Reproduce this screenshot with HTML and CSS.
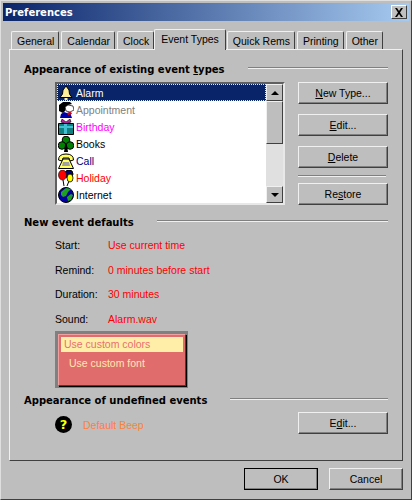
FILE: index.html
```html
<!DOCTYPE html>
<html lang="en">
<head>
    <meta charset="UTF-8">
    <title>Preferences</title>
    <link rel="stylesheet" href="styles.css">
</head>
<body>
    <div class="window">
        <div class="titlebar">
            <span class="title">Preferences</span>
            <span class="close">
                <svg width="10" height="9" viewBox="0 0 10 9"><path d="M1 0h2l2 3 2-3h2L6 4.500 9 9H7L5 6 3 9H1l3-4.500z" fill="#000"/></svg>
            </span>
        </div>

        <div class="tabs">
            <div class="tab">General</div>
            <div class="tab">Calendar</div>
            <div class="tab">Clock</div>
            <div class="tab active">Event Types</div>
            <div class="tab">Quick Rems</div>
            <div class="tab">Printing</div>
            <div class="tab">Other</div>
        </div>

        <div class="panel">
            <!-- Existing event types -->
            <div class="heading heading-first">
                <span>Appearance of existing event <u>t</u>ypes</span>
                <i class="rule"></i>
            </div>
            <div class="types">
                <div class="list">
                    <div class="rows">
                        <div class="row selected">
                            <svg class="icon" viewBox="0 0 16 16"><path d="M8 1 9.500 3 11 5 11.500 9 14 12.500H2L4.500 9 5 5 6.500 3z" fill="#ffef9a" stroke="#000"/><path d="M6.500 13h3v2h-3z" fill="#ffef9a"/></svg>
                            <span>Alarm</span>
                        </div>
                        <div class="row c-gray">
                            <svg class="icon" viewBox="0 0 16 16"><path d="M1 9 1 3 5 0 12 0 14 2 10 3 8 5 7 9 5 11z" fill="#000"/><path d="M7 5 10 3 15 4 16 8 12 10 8 9z" fill="#fff" stroke="#000" stroke-width=".7"/><path d="M3 12 6 10 9 11 12 10 14 16H2z" fill="#0000a8"/><path d="M9 11 13 10 14 12 10 13z" fill="#e00000"/></svg>
                            <span>Appointment</span>
                        </div>
                        <div class="row c-magenta">
                            <svg class="icon" viewBox="0 0 16 16"><path d="M4 0 8 3 12 0 13 3 8 5 3 3z" fill="#c020a0" stroke="#000" stroke-width=".6"/><path d="M.500 4.500h15v11H.500z" fill="#108080" stroke="#000"/><path d="M6 5h3v10H6zM1 7h14v2H1z" fill="#40c0d0"/></svg>
                            <span>Birthday</span>
                        </div>
                        <div class="row c-black">
                            <svg class="icon" viewBox="0 0 16 16"><circle cx="8" cy="4" r="3.800" fill="#008000" stroke="#000"/><circle cx="4" cy="9.500" r="3.800" fill="#008000" stroke="#000"/><circle cx="12" cy="9.500" r="3.800" fill="#008000" stroke="#000"/><path d="M7 9h2l1 7H6z" fill="#000"/></svg>
                            <span>Books</span>
                        </div>
                        <div class="row c-navy">
                            <svg class="icon" viewBox="0 0 16 16"><path d="M.500 7Q.500 1 8 1t7.500 6l-3.500 1-1-3H5L4 8z" fill="#ffff60" stroke="#000"/><path d="M5 6h6l4.500 9.500H.500z" fill="#ffff60" stroke="#000"/><path d="M5 9h6l1 4H4z" fill="#a0a0a0"/></svg>
                            <span>Call</span>
                        </div>
                        <div class="row c-red">
                            <svg class="icon" viewBox="0 0 16 16"><path d="M5 10 6 16M11 11 9 16" stroke="#000"/><ellipse cx="11" cy="4" rx="4" ry="4" fill="#000080" stroke="#000"/><ellipse cx="4.500" cy="5" rx="4" ry="5" fill="#ff0000" stroke="#000" stroke-width=".6"/><ellipse cx="12" cy="8" rx="3" ry="4" fill="#ffff00" stroke="#000" stroke-width=".8"/></svg>
                            <span>Holiday</span>
                        </div>
                        <div class="row c-black">
                            <svg class="icon" viewBox="0 0 16 16"><circle cx="8" cy="8" r="7.500" fill="#0000a0" stroke="#000"/><path d="M3 5 8 1l5 1-3 3-2 4-3 1-2-2zM9 10l4-3 2 1-2 5-3 1z" fill="#20a020"/></svg>
                            <span>Internet</span>
                        </div>
                    </div>
                    <div class="scrollbar">
                        <div class="arrow"><i class="tri-up"></i></div>
                        <div class="track"><div class="thumb"></div></div>
                        <div class="arrow"><i class="tri-down"></i></div>
                    </div>
                </div>
                <div class="actions">
                    <button class="btn"><u>N</u>ew Type...</button>
                    <button class="btn"><u>E</u>dit...</button>
                    <button class="btn"><u>D</u>elete</button>
                    <i class="rule action-rule"></i>
                    <button class="btn">Re<u>s</u>tore</button>
                </div>
            </div>

            <!-- New event defaults -->
            <div class="heading heading-defaults">
                <span>New event defaults</span>
                <i class="rule"></i>
            </div>
            <div class="defaults">
                <span>Start:</span><span class="val">Use current time</span>
                <span>Remind:</span><span class="val">0 minutes before start</span>
                <span>Duration:</span><span class="val">30 minutes</span>
                <span>Sound:</span><span class="val">Alarm.wav</span>
            </div>
            <div class="custom">
                <div class="custom-inner">
                    <div class="custom-sel">Use custom colors</div>
                    <div class="custom-font">Use custom font</div>
                </div>
            </div>

            <!-- Undefined events -->
            <div class="heading heading-undefined">
                <span>Appearance of undefined events</span>
                <i class="rule"></i>
            </div>
            <div class="undefined">
                <svg class="help" viewBox="0 0 17 17"><circle cx="8.500" cy="8.500" r="8.500" fill="#000"/><text x="8.500" y="13" text-anchor="middle" class="help-mark">?</text></svg>
                <span class="beep">Default Beep</span>
                <button class="btn btn-edit">E<u>d</u>it...</button>
            </div>
        </div>

        <div class="footer">
            <button class="btn btn-wide btn-default">OK</button>
            <button class="btn btn-wide">Cancel</button>
        </div>
    </div>
</body>
</html>
```

FILE: styles.css
```css
* {
    box-sizing: border-box;
}
body {
    margin: 0;
    width: 412px;
    height: 500px;
    overflow: hidden;
    font-family: "Liberation Sans", Arial, sans-serif;
    font-size: 10.500px;
    color: #000;
    background: #bebebe;
}
i {
    display: block;
}
.window {
    width: 412px;
    height: 500px;
    padding: 2px;
    background: #bebebe;
    border: 1px solid;
    border-color: #dfdfdf #404040 #404040 #dfdfdf;
    display: flex;
    flex-direction: column;
}
.titlebar {
    height: 18px;
    flex: none;
    padding: 0 2px;
    display: flex;
    align-items: center;
    justify-content: space-between;
    background: linear-gradient(90deg, #0a246a 0%, #a6caf0 100%);
}
.title {
    color: #fff;
    font-family: "DejaVu Sans", sans-serif;
    font-weight: bold;
    font-size: 10px;
}
.close {
    width: 16px;
    height: 14px;
    background: #c0c0c0;
    border: 1px solid;
    border-color: #fff #404040 #404040 #fff;
    display: flex;
    align-items: center;
    justify-content: center;
}

/* tabs */
.tabs {
    flex: none;
    height: 28px;
    padding: 7px 0 0 8px;
    display: flex;
    align-items: flex-end;
    gap: 2px;
}
.tab {
    height: 18px;
    padding: 2px 4px 0 5px;
    line-height: 14px;
    border: 1px solid;
    border-bottom: none;
    border-color: #f0f0f0 #404040 #bebebe #f0f0f0;
    border-radius: 2px 2px 0 0;
    white-space: nowrap;
}
.tab.active {
    height: 21px;
    margin: 0 -1px -1px -2px;
    padding: 2px 6px 0 6px;
    background: #bebebe;
    position: relative;
    z-index: 1;
}
.panel {
    width: 394px;
    margin-left: 6px;
    height: 412px;
    flex: none;
    padding: 0 14px;
    border: 1px solid;
    border-color: #f0f0f0 #404040 #404040 #f0f0f0;
}

/* section headings */
.heading {
    display: flex;
    align-items: center;
    height: 14px;
    font-family: "DejaVu Sans", sans-serif;
    font-weight: bold;
    font-size: 10px;
    white-space: nowrap;
}
.heading .rule {
    flex: 1;
    margin-left: 23px;
    margin-top: -3px;
}
.rule {
    height: 2px;
    background: #808080;
    border-bottom: 1px solid #f0f0f0;
}
.heading-first {
    margin-top: 12px;
}
.heading-defaults {
    margin-top: 10px;
}
.heading-undefined {
    margin-top: 5px;
}

/* event type list */
.types {
    display: flex;
    margin-top: 6px;
    padding-left: 31px;
}
.list {
    width: 230px;
    height: 123px;
    display: flex;
    background: #fff;
    border: 2px solid;
    border-color: #606060 #e8e8e8 #e8e8e8 #606060;
}
.rows {
    flex: 1;
    overflow: hidden;
}
.row {
    height: 17px;
    display: flex;
    align-items: center;
    gap: 2px;
    padding-left: 1px;
}
.icon {
    width: 16px;
    height: 16px;
    flex: none;
}
.selected {
    background: #0a246a;
    color: #fff;
    outline: 1px dotted #ffef9a;
    outline-offset: -1px;
}
.c-gray { color: #808080; }
.c-magenta { color: #ff00ff; }
.c-black { color: #000; }
.c-navy { color: #000080; }
.c-red { color: #ff0000; }
.scrollbar {
    width: 17px;
    flex: none;
    display: flex;
    flex-direction: column;
    background: #e0e0e0;
}
.arrow, .thumb {
    background: #bebebe;
    border: 1px solid;
    border-color: #f0f0f0 #404040 #404040 #f0f0f0;
}
.arrow {
    height: 17px;
    flex: none;
    display: flex;
    align-items: center;
    justify-content: center;
}
.track {
    flex: 1;
}
.thumb {
    height: 43px;
}
.tri-up {
    border: 4px solid transparent;
    border-top: none;
    border-bottom-color: #000;
}
.tri-down {
    border: 4px solid transparent;
    border-bottom: none;
    border-top-color: #000;
}

/* buttons */
.btn {
    display: block;
    width: 90px;
    height: 22px;
    padding: 0;
    font-family: inherit;
    font-size: 10.500px;
    color: #000;
    background: #bebebe;
    border: 1px solid;
    border-color: #f0f0f0 #404040 #404040 #f0f0f0;
    box-shadow: inset -1px -1px 0 #808080;
}
.actions {
    margin-left: 13px;
    display: flex;
    flex-direction: column;
    gap: 10px;
}
.action-rule {
    margin: -3px 2px -4px 0;
}
.btn-edit {
    margin-left: auto;
}

/* defaults */
.defaults {
    display: grid;
    grid-template-columns: 53px 1fr;
    grid-auto-rows: 24.500px;
    align-items: center;
    padding-left: 31px;
    margin-top: 4px;
}
.val {
    color: #ff0000;
}
.custom {
    width: 133px;
    height: 57px;
    margin-left: 31px;
    padding: 3px 2px 2px 3px;
    background: #808080;
}
.custom-inner {
    height: 52px;
    padding: 2px 2px 0 2px;
    background: #e06c6c;
    border: 1px solid;
    border-color: #f0a0a0 #a01818 #a01818 #f0a0a0;
    box-shadow: 1px 1px 0 #000;
}
.custom-sel {
    height: 15px;
    line-height: 14px;
    padding-left: 3px;
    background: #ffeea8;
    color: #e87070;
}
.custom-font {
    margin-top: 5px;
    padding-left: 8px;
    color: #ffe8b0;
}

/* undefined events */
.undefined {
    display: flex;
    align-items: center;
    height: 22px;
    margin-top: 5px;
    padding-left: 31px;
}
.help {
    width: 17px;
    height: 17px;
    margin-top: 3px;
    flex: none;
}
.help-mark {
    font-family: "DejaVu Sans", sans-serif;
    font-weight: bold;
    font-size: 13px;
    fill: #ffff00;
}
.beep {
    margin: 3px 0 0 11px;
    color: #ff8040;
}

/* bottom buttons */
.footer {
    display: flex;
    justify-content: flex-end;
    gap: 11px;
    padding: 7px 6px 0 0;
}
.btn-wide {
    width: 74px;
}
.btn-default {
    outline: 1px solid #000;
    outline-offset: -1px;
}
```
